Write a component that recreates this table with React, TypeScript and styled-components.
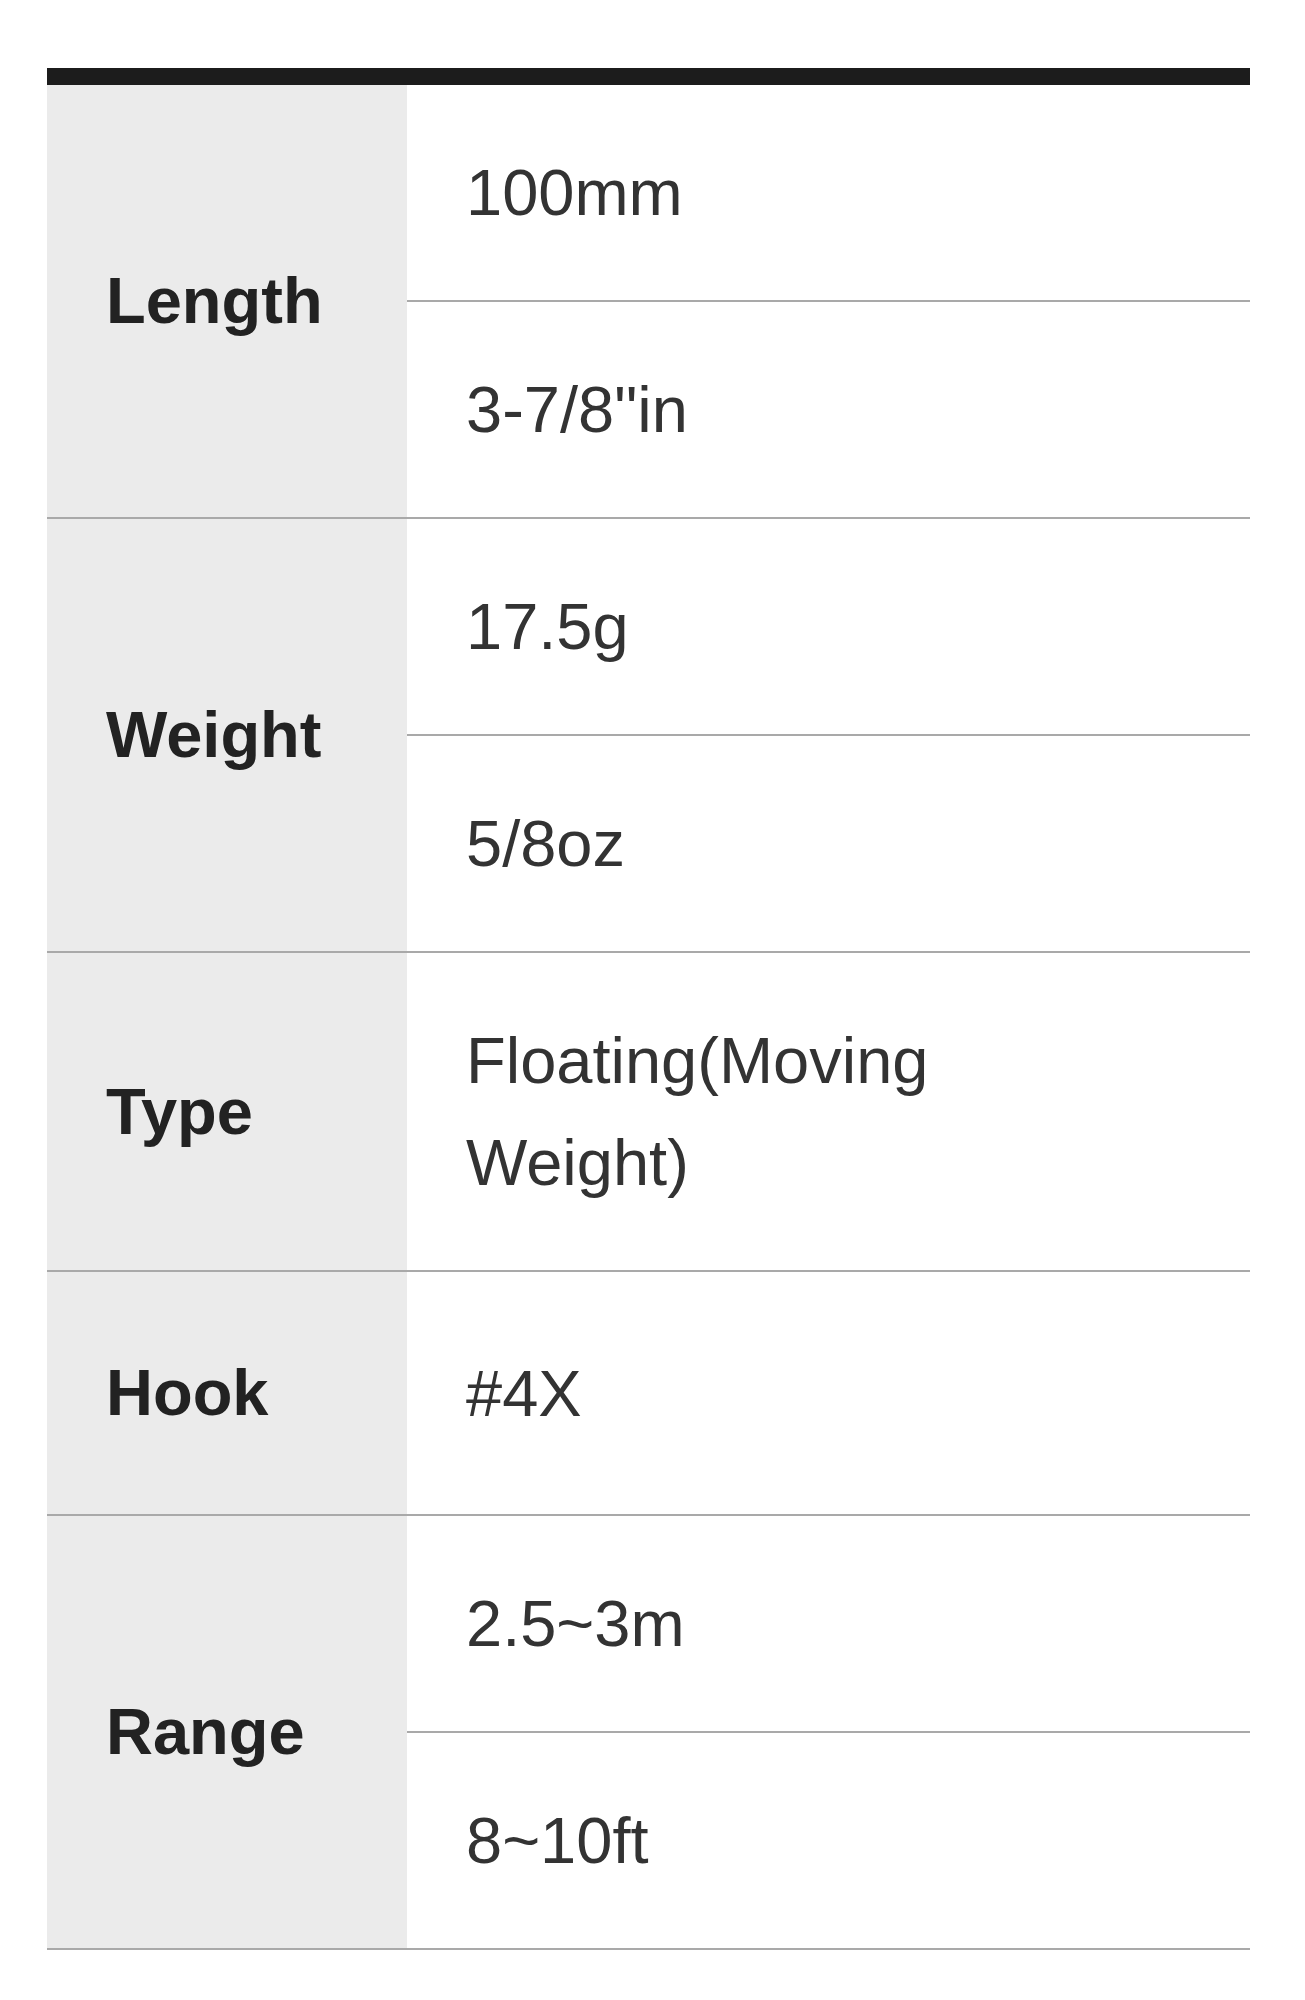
import React from "react";
import styled, { createGlobalStyle } from "styled-components";

const GlobalStyle = createGlobalStyle`
  html, body {
    margin: 0;
    padding: 0;
    background: #ffffff;
  }
  body {
    font-family: "Liberation Sans", Arial, sans-serif;
  }
`;

const Page = styled.div`
  padding: 68px 55px 40px 47px;
`;

const SpecTable = styled.div`
  width: 1203px;
  border-top: 17px solid #1c1c1c;
`;

const Group = styled.div`
  display: grid;
  grid-template-columns: 360px 1fr;
  border-bottom: 2px solid #a9a9a9;
`;

const Label = styled.div`
  background: #ebebeb;
  display: flex;
  align-items: center;
  padding: 70px 20px 70px 59px;
  font-size: 65px;
  line-height: 102px;
  font-weight: 700;
  color: #222222;
`;

const Values = styled.div`
  display: flex;
  flex-direction: column;
  justify-content: center;
`;

const Value = styled.div`
  padding: 57px 90px 56px 59px;
  font-size: 65px;
  line-height: 102px;
  color: #333333;
  border-bottom: 2px solid #a9a9a9;

  &:last-child {
    border-bottom: none;
  }
`;

type Spec = { label: string; values: string[] };

const specs: Spec[] = [
  { label: "Length", values: ["100mm", "3-7/8\"in"] },
  { label: "Weight", values: ["17.5g", "5/8oz"] },
  { label: "Type", values: ["Floating(Moving Weight)"] },
  { label: "Hook", values: ["#4X"] },
  { label: "Range", values: ["2.5~3m", "8~10ft"] },
];

export default function App() {
  return (
    <>
      <GlobalStyle />
      <Page>
        <SpecTable>
          {specs.map((s) => (
            <Group key={s.label}>
              <Label>{s.label}</Label>
              <Values>
                {s.values.map((v) => (
                  <Value key={v}>{v}</Value>
                ))}
              </Values>
            </Group>
          ))}
        </SpecTable>
      </Page>
    </>
  );
}
